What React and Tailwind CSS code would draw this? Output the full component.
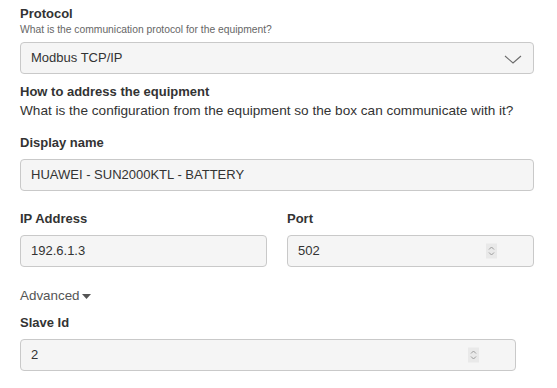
import React from "react";

function Spinner() {
  return (
    <span className="absolute right-[36px] top-1/2 -translate-y-1/2 flex h-[15px] w-[11px] items-center justify-center bg-[#e9e9e9]">
      <svg width="7" height="11" viewBox="0 0 7 11" fill="none" stroke="#9a9a9a" strokeWidth="1">
        <path d="M1 4 L3.5 1.5 L6 4" />
        <path d="M1 7 L3.5 9.5 L6 7" />
      </svg>
    </span>
  );
}

function Input({ value, spinner, className = "" }) {
  return (
    <div className={`relative flex h-8 items-center rounded-[4px] border border-[#c9c9c9] bg-[#f5f5f5] px-[10px] text-[13px] text-[#333] ${className}`}>
      <span>{value}</span>
      {spinner && <Spinner />}
    </div>
  );
}

function Label({ children, className = "" }) {
  return <div className={`text-[13px] font-bold leading-4 text-[#333] ${className}`}>{children}</div>;
}

export default function App() {
  return (
    <div className="min-h-screen bg-white font-['Liberation_Sans',Arial,sans-serif]">
      <div className="w-[514px] ml-5 pt-[6px]">
        <Label>Protocol</Label>
        <div className="mt-[2px] text-[10.3px] leading-3 text-[#666]">What is the communication protocol for the equipment?</div>

        <div className="relative mt-[6px] flex h-8 items-center rounded-[4px] border border-[#c9c9c9] bg-[#f5f5f5] px-[10px] text-[13px] text-[#333]">
          <span>Modbus TCP/IP</span>
          <svg className="absolute right-[11px] top-[12px]" width="18" height="9" viewBox="0 0 18 9" fill="none" stroke="#6b6b6b" strokeWidth="1.1">
            <path d="M1 1 L9 8 L17 1" />
          </svg>
        </div>

        <Label className="mt-[10px]">How to address the equipment</Label>
        <div className="mt-[3px] text-[13.6px] leading-4 text-[#333]">
          What is the configuration from the equipment so the box can communicate with it?
        </div>

        <Label className="mt-[16px]">Display name</Label>
        <Input className="mt-2" value="HUAWEI - SUN2000KTL - BATTERY" />

        <div className="mt-5 grid grid-cols-2 gap-5">
          <div>
            <Label>IP Address</Label>
            <Input className="mt-2" value="192.6.1.3" />
          </div>
          <div>
            <Label>Port</Label>
            <Input className="mt-2" value="502" spinner />
          </div>
        </div>

        <div className="mt-[21px] flex items-center gap-[2px] text-[13.4px] leading-4 text-[#555]">
          <span>Advanced</span>
          <svg width="9" height="5" viewBox="0 0 9 5" fill="#555">
            <path d="M0 0 H9 L4.5 5 Z" />
          </svg>
        </div>

        <Label className="mt-[11px]">Slave Id</Label>
        <Input className="mt-2 w-[496px]" value="2" spinner />
      </div>
    </div>
  );
}
